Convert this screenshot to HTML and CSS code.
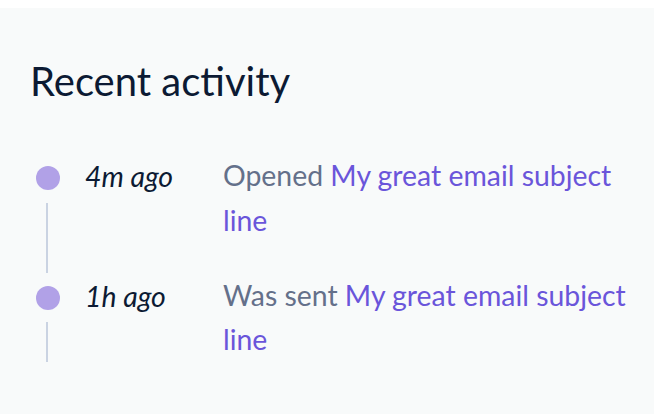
FILE: index.html
```html
<!DOCTYPE html>
<html lang="en">
<head>
<meta charset="utf-8">
<title>Recent activity</title>
<link rel="stylesheet" href="styles.css">
</head>
<body>
<section class="panel">
  <h1 class="title">Recent activity</h1>
  <ul class="timeline">
    <li class="item">
      <div class="marker"><span class="dot"></span><span class="line"></span></div>
      <div class="time">4m ago</div>
      <div class="desc">Opened <a class="link" href="#">My great email subject line</a></div>
    </li>
    <li class="item item-last">
      <div class="marker"><span class="dot"></span><span class="line"></span></div>
      <div class="time">1h ago</div>
      <div class="desc">Was sent <a class="link" href="#">My great email subject line</a></div>
    </li>
  </ul>
</section>
</body>
</html>
```

FILE: styles.css
```css
html, body {
  margin: 0;
  padding: 0;
  background: #ffffff;
}
body {
  padding-top: 8px;
  font-family: "Lato", "Noto Sans", sans-serif;
}
.panel {
  background: #f8fafa;
  min-height: 406px;
  box-sizing: border-box;
  padding: 49px 20px 0 30px;
}
.title {
  margin: 0;
  font-size: 40px;
  line-height: 48px;
  font-weight: 400;
  color: #0c1a33;
}
.timeline {
  list-style: none;
  margin: 48px 0 0 0;
  padding: 0 0 0 6px;
}
.item {
  display: flex;
  align-items: stretch;
  padding-bottom: 30px;
}
.item-last {
  padding-bottom: 0;
}
.marker {
  width: 24px;
  flex: none;
  display: flex;
  flex-direction: column;
  align-items: center;
  padding-top: 13px;
  margin-bottom: -30.4px;
}
.item-last .marker {
  margin-bottom: 0;
}
.dot {
  width: 24px;
  height: 24px;
  border-radius: 50%;
  background: #b1a1e7;
  flex: none;
}
.line {
  width: 2px;
  flex: 1;
  background: #cad3e2;
  margin-top: 12.5px;
  margin-right: 2px;
}
.time {
  width: 138px;
  flex: none;
  margin-left: 25px;
  font-size: 28.4px;
  line-height: 44.8px;
  font-style: italic;
  color: #0c1a33;
  padding-top: 1px;
}
.desc {
  flex: 1;
  font-size: 28.4px;
  line-height: 44.8px;
  color: #64708a;
}
.link {
  color: #6a55da;
  text-decoration: none;
}
```
